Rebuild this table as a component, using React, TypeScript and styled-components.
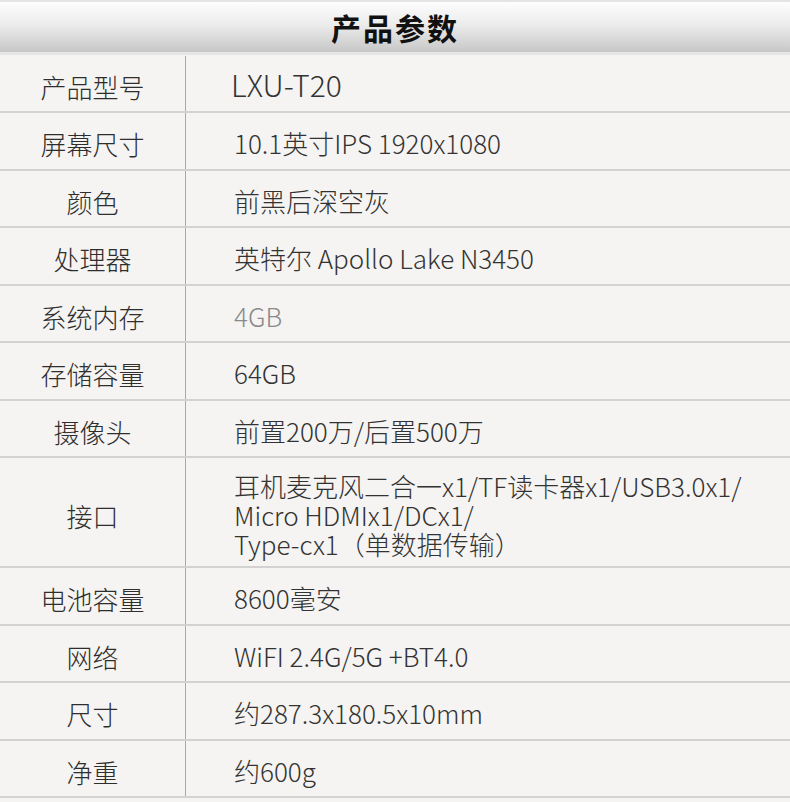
import React from "react";
import styled, { createGlobalStyle } from "styled-components";

const GlobalStyle = createGlobalStyle`
  html, body {
    margin: 0;
    padding: 0;
    background: #f5f4f2;
  }
  body {
    font-family: "Noto Sans CJK SC", "Noto Sans", sans-serif;
    color: #333;
  }
`;

const Page = styled.div`
  width: 790px;
  height: 802px;
  overflow: hidden;
  background: #f5f4f2;
`;

const TitleBar = styled.div`
  border-top: 2px solid #e4e4e4;
  border-bottom: 3px solid #e6e6e6;
  height: 50px;
  display: flex;
  align-items: center;
  justify-content: center;
  background: linear-gradient(to bottom, #fdfdfd 0%, #ececec 45%, #c7c7c7 100%);
`;

const Title = styled.h1`
  margin: 0;
  font-size: 30px;
  font-weight: 700;
  letter-spacing: 2px;
  color: #111;
  line-height: 1;
`;

const Table = styled.div`
  display: flex;
  flex-direction: column;
  padding-top: 0.5px;
`;

const Row = styled.div<{ tall?: boolean }>`
  display: grid;
  grid-template-columns: 185px 1px 1fr;
  height: ${(p) => (p.tall ? "108px" : "55.5px")};
  border-bottom: 2px solid #d2d2d2;
`;

const Label = styled.div`
  display: flex;
  align-items: center;
  justify-content: center;
  padding-top: 6px;
  font-size: 26px;
  font-weight: 300;
  color: #2e2e2e;
`;

const Divider = styled.div`
  background: #a9a9a9;
`;

const Value = styled.div<{ muted?: boolean; big?: boolean }>`
  display: flex;
  flex-direction: column;
  justify-content: center;
  padding: ${(p) => (p.big ? "2px 0 0 45px" : "4px 0 0 48px")};
  font-size: ${(p) => (p.big ? "30px" : "26px")};
  font-weight: 300;
  line-height: 29px;
  white-space: nowrap;
  color: ${(p) => (p.muted ? "#8a8a8a" : "#333")};
`;

const specs: { label: string; value: string[]; muted?: boolean; big?: boolean }[] = [
  { label: "产品型号", value: ["LXU-T20"], big: true },
  { label: "屏幕尺寸", value: ["10.1英寸IPS 1920x1080"] },
  { label: "颜色", value: ["前黑后深空灰"] },
  { label: "处理器", value: ["英特尔 Apollo Lake N3450"] },
  { label: "系统内存", value: ["4GB"], muted: true },
  { label: "存储容量", value: ["64GB"] },
  { label: "摄像头", value: ["前置200万/后置500万"] },
  {
    label: "接口",
    value: ["耳机麦克风二合一x1/TF读卡器x1/USB3.0x1/", "Micro HDMIx1/DCx1/", "Type-cx1（单数据传输）"],
  },
  { label: "电池容量", value: ["8600毫安"] },
  { label: "网络", value: ["WiFI 2.4G/5G +BT4.0"] },
  { label: "尺寸", value: ["约287.3x180.5x10mm"] },
  { label: "净重", value: ["约600g"] },
];

export default function App() {
  return (
    <Page>
      <GlobalStyle />
      <TitleBar>
        <Title>产品参数</Title>
      </TitleBar>
      <Table>
        {specs.map((s) => (
          <Row key={s.label} tall={s.value.length > 1}>
            <Label>{s.label}</Label>
            <Divider />
            <Value muted={s.muted} big={s.big}>
              {s.value.map((line) => (
                <div key={line}>{line}</div>
              ))}
            </Value>
          </Row>
        ))}
      </Table>
    </Page>
  );
}
